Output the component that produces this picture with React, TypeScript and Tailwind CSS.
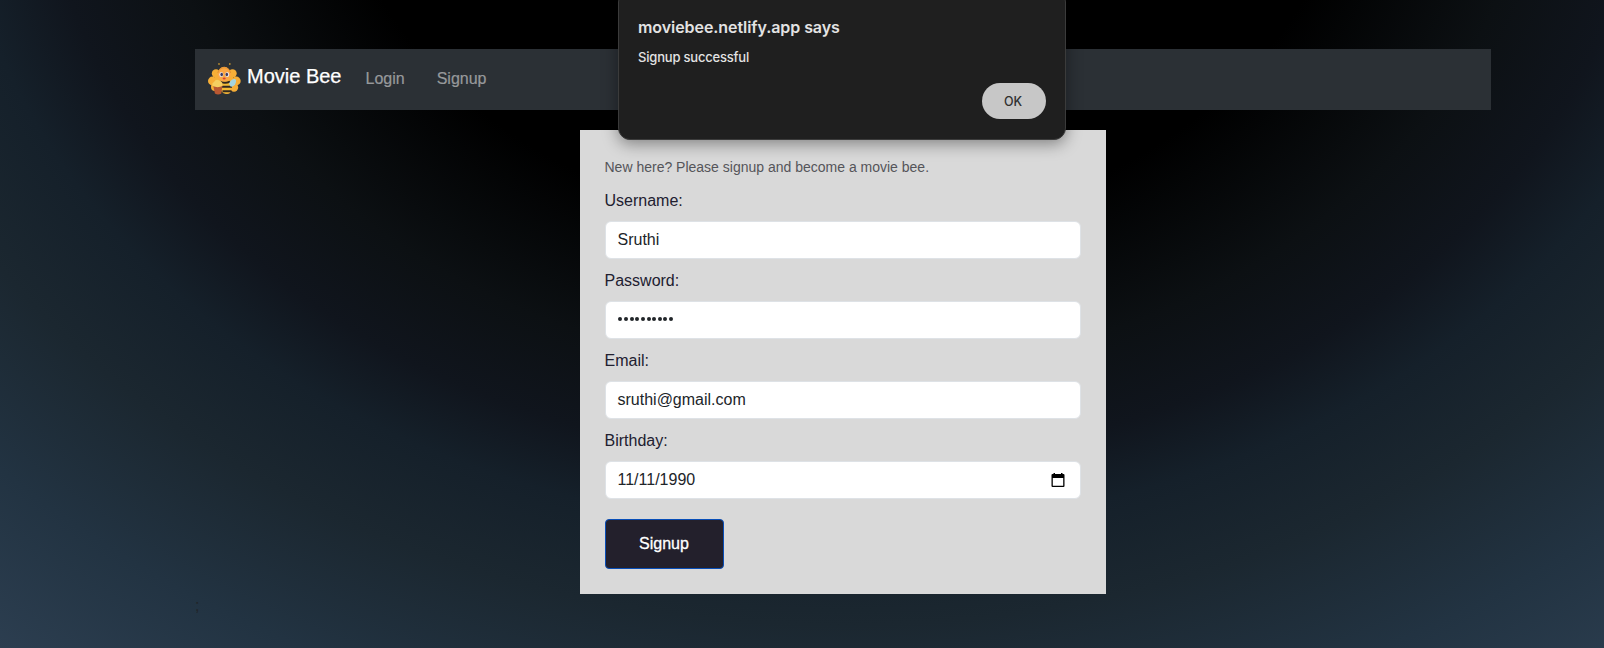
import type { ReactNode } from "react";

function BeeLogo() {
  return (
    <svg viewBox="0 0 36 36" className="h-9 w-9 shrink-0" aria-hidden="true">
      <g fill="#f6ae37">
        <circle cx="9" cy="11.5" r="4.2" />
        <circle cx="25.5" cy="11.5" r="4.2" />
        <circle cx="5.4" cy="19" r="4.4" />
        <circle cx="29.3" cy="19" r="4.4" />
        <circle cx="8" cy="25" r="4" />
        <circle cx="27" cy="25.5" r="4.2" />
        <circle cx="20" cy="28" r="4" />
        <rect x="8" y="9" width="18" height="17" />
      </g>
      <circle cx="12" cy="2" r="0.9" fill="#b58b31" />
      <circle cx="22.8" cy="2" r="0.9" fill="#b58b31" />
      <path d="M12.2 3 14 6.5M22.6 3 21 6.5" stroke="#3b3020" strokeWidth=".7" fill="none" />
      <ellipse cx="18.5" cy="25" rx="5.2" ry="6.6" fill="#f4bb35" />
      <path d="M13 19.6q5 2.4 10 0M14.5 24.8h10.5M15.5 29.3h9" stroke="#302820" strokeWidth="2" fill="none" />
      <path d="M22 21.5c2.2-5 6.2-5.5 7-3.5.6 3-2 7.4-5.6 6.6Z" fill="#a5d4de" />
      <ellipse cx="17.2" cy="12.2" rx="6.6" ry="7.4" fill="#fba744" />
      <path d="M10.8 11c1-7 11.8-7 12.8 0" stroke="#dd8a2a" strokeWidth=".8" fill="none" />
      <ellipse cx="14.3" cy="12.4" rx="2" ry="2.5" fill="#e8e7ed" />
      <ellipse cx="20.2" cy="12.4" rx="2" ry="2.5" fill="#e8e7ed" />
      <ellipse cx="14.7" cy="12.5" rx="1.3" ry="1.8" fill="#403b60" />
      <ellipse cx="19.8" cy="12.5" rx="1.3" ry="1.8" fill="#403b60" />
      <ellipse cx="17.2" cy="16.6" rx="1.5" ry="1" fill="#d54135" />
      <path d="M6 22.5h9.6l-1.3 9q-3.2 2-6.4 0Z" fill="#b95832" />
      <path d="M5.6 24q-1-3 1.4-4 2-3.5 5.2-1.5 4 1.2 3.4 5.5-5 2.3-10 0Z" fill="#f5cf60" />
    </svg>
  );
}

function CalendarIcon() {
  return (
    <svg viewBox="0 0 14 15" className="h-[15px] w-[14px]" aria-hidden="true">
      <path d="M2.5 0h1.5v2h-1.5zM10 0h1.5v2H10z" />
      <path fillRule="evenodd" d="M1.5 1h11q1 0 1 1v11q0 1-1 1h-11q-1 0-1-1V2q0-1 1-1Zm.3 4v7.7h10.4V5Z" />
    </svg>
  );
}

function Field({ label, children }: { label: string; children: ReactNode }) {
  return (
    <div className="mb-[10px]">
      <div className="-ml-[0.5px] mb-2 leading-6 text-[#212030]">{label}</div>
      <div className="flex h-[38px] w-full items-center justify-between rounded-md border border-[#dee2e6] bg-white pr-3 pl-[11.5px] leading-6 text-[#212529]">
        {children}
      </div>
    </div>
  );
}

export default function App() {
  return (
    <div className="relative h-[648px] overflow-hidden bg-[radial-gradient(1337px_1053px_at_843px_-170px,#000_38%,#0c1013_51.5%,#10151d_60%,#15202a_66.5%,#1b2730_75.5%,#223342_87.5%,#2c3e50_100%)] pt-[49px] font-['Liberation_Sans',Arial,sans-serif] text-base">
      <div className="ml-[195px] w-[1296px]">
        <nav className="flex h-[61px] items-center bg-[#2b3035] pl-3">
          <BeeLogo />
          <span className="ml-1 pb-[7px] text-xl leading-[30px] text-white [-webkit-text-stroke:0.25px]">Movie Bee</span>
          <span className="ml-6 pb-0.5 text-[#97999b] [-webkit-text-stroke:0.2px]">Login</span>
          <span className="ml-8 pb-0.5 text-[#97999b] [-webkit-text-stroke:0.2px]">Signup</span>
        </nav>
        <main className="mx-auto mt-5 h-[464px] w-[526px] bg-[#d9d9d9] px-[25px] pt-[26px]">
          <p className="-ml-[0.5px] mb-[11px] text-sm leading-[22px] text-[#555559]">New here? Please signup and become a movie bee.</p>
          <Field label="Username:">Sruthi</Field>
          <Field label="Password:">
            <div className="flex gap-[1.65px] pb-0.5 pl-[0.8px]">
              {Array.from({ length: 10 }, (_, i) => (
                <i key={i} className="h-1 w-1 rounded-full bg-[#212529]" />
              ))}
            </div>
          </Field>
          <Field label="Email:">sruthi@gmail.com</Field>
          <Field label="Birthday:">
            <span>11/11/1990</span>
            <span className="mr-[3px]"><CalendarIcon /></span>
          </Field>
          <button className="mt-[10px] h-[50px] w-[119px] rounded-[4px] border border-[#084eb8] bg-[#23202c] pr-px text-white [-webkit-text-stroke:0.3px]">Signup</button>
        </main>
        <div className="leading-6 text-[#212529]">;</div>
      </div>
      <div className="absolute top-[-10px] left-[618px] flex h-[150px] w-[448px] flex-col rounded-xl border border-[#3b3b3b] bg-[#1f1f1f] px-[19px] pt-6 font-[Inter,sans-serif] shadow-[0_4px_16px_rgba(0,0,0,0.4)]">
        <h1 className="text-base leading-6 font-semibold tracking-[-0.004em] text-[#e3e3e3]">moviebee.netlify.app says</h1>
        <p className="mt-2 text-[13px] leading-5 font-medium tracking-[-0.015em] text-[#e3e3e3]">Signup successful</p>
        <button className="mt-4 h-9 w-16 self-end rounded-full bg-[#c7c7c7] pt-0.5 pr-0.5 text-[12.5px] font-medium text-[#303030]">OK</button>
      </div>
    </div>
  );
}
